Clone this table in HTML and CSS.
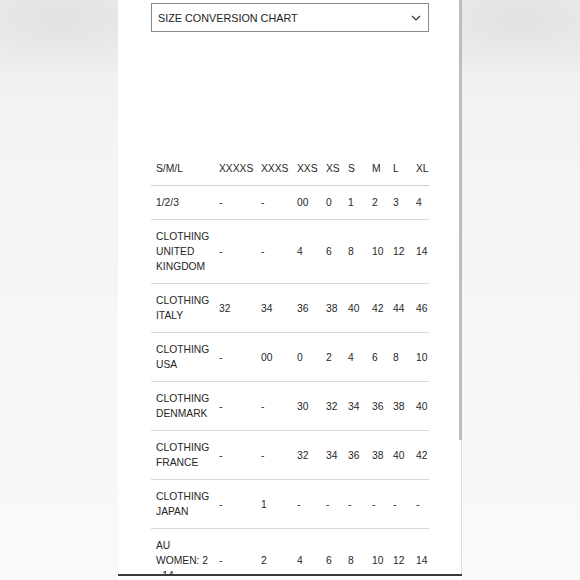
FILE: index.html
```html
<!DOCTYPE html>
<html lang="en">
<head>
<meta charset="utf-8">
<title>Size conversion chart</title>
<link rel="stylesheet" href="styles.css">
</head>
<body>
<div class="panel">
  <div class="content">
    <div class="select">
      <span class="select-label">SIZE CONVERSION CHART</span>
      <svg class="chev" width="10" height="6" viewBox="0 0 10 6"><polyline points="1,1 5,5 9,1" fill="none" stroke="#333" stroke-width="1.1"/></svg>
    </div>
    <table class="chart">
      <colgroup>
        <col class="c-name"><col class="c-4xs"><col class="c-3xs"><col class="c-2xs"><col class="c-xs"><col class="c-s"><col class="c-m"><col class="c-l"><col class="c-xl">
      </colgroup>
      <thead>
        <tr><th>S/M/L</th><th>XXXXS</th><th>XXXS</th><th>XXS</th><th>XS</th><th>S</th><th>M</th><th>L</th><th>XL</th></tr>
      </thead>
      <tbody>
        <tr><td>1/2/3</td><td>-</td><td>-</td><td>00</td><td>0</td><td>1</td><td>2</td><td>3</td><td>4</td></tr>
        <tr><td>CLOTHING<br>UNITED<br>KINGDOM</td><td>-</td><td>-</td><td>4</td><td>6</td><td>8</td><td>10</td><td>12</td><td>14</td></tr>
        <tr><td>CLOTHING<br>ITALY</td><td>32</td><td>34</td><td>36</td><td>38</td><td>40</td><td>42</td><td>44</td><td>46</td></tr>
        <tr><td>CLOTHING<br>USA</td><td>-</td><td>00</td><td>0</td><td>2</td><td>4</td><td>6</td><td>8</td><td>10</td></tr>
        <tr><td>CLOTHING<br>DENMARK</td><td>-</td><td>-</td><td>30</td><td>32</td><td>34</td><td>36</td><td>38</td><td>40</td></tr>
        <tr><td>CLOTHING<br>FRANCE</td><td>-</td><td>-</td><td>32</td><td>34</td><td>36</td><td>38</td><td>40</td><td>42</td></tr>
        <tr><td>CLOTHING<br>JAPAN</td><td>-</td><td>1</td><td>-</td><td>-</td><td>-</td><td>-</td><td>-</td><td>-</td></tr>
        <tr><td>AU<br>WOMEN: 2<br>- 14</td><td>-</td><td>2</td><td>4</td><td>6</td><td>8</td><td>10</td><td>12</td><td>14</td></tr>
      </tbody>
    </table>
  </div>
  <div class="scrollbar"><div class="thumb"></div></div>
  <div class="footer"></div>
</div>
</body>
</html>
```
FILE: styles.css
```css
html, body {
  margin: 0;
  padding: 0;
}
body {
  width: 580px;
  height: 580px;
  overflow: hidden;
  background:
    radial-gradient(ellipse 140px 60px at 60px 20px, #e2e2e2, rgba(226,226,226,0)),
    radial-gradient(ellipse 140px 60px at 520px 20px, #e2e2e2, rgba(226,226,226,0)),
    linear-gradient(#ececec 0px, #f3f3f3 120px, #f6f6f6 300px, #f9f9fa 580px);
  font-family: "Liberation Sans", Arial, sans-serif;
  color: #262626;
}
.panel {
  position: relative;
  width: 344px;
  height: 580px;
  margin-left: 118px;
  background: #fff;
  overflow: hidden;
}
.content {
  padding: 3px 33px 0 33px;
}
.select {
  display: flex;
  align-items: center;
  justify-content: space-between;
  height: 27px;
  border: 1px solid #8a8a8a;
  padding: 0 7px 0 6px;
}
.select-label {
  font-size: 10.8px;
  color: #222;
}
.chev {
  display: block;
  margin-top: 1px;
}
.chart {
  margin-top: 120px;
  width: 278px;
  border-collapse: collapse;
  table-layout: fixed;
  font-size: 10.3px;
  line-height: 15px;
}
.c-name { width: 63px; }
.c-4xs { width: 42px; }
.c-3xs { width: 36px; }
.c-2xs { width: 29px; }
.c-xs { width: 22px; }
.c-s { width: 24px; }
.c-m { width: 21px; }
.c-l { width: 23px; }
.c-xl { width: 18px; }
.chart th,
.chart td {
  padding: 9px 0 9px 5px;
  text-align: left;
  font-weight: normal;
  vertical-align: middle;
  white-space: nowrap;
  border-bottom: 1px solid #d9d9d9;
}
.chart th {
  border-bottom-color: #cfcfcf;
}
.scrollbar {
  position: absolute;
  top: 0;
  right: 0;
  width: 3px;
  height: 580px;
  border-right: 1px solid #dedede;
  box-sizing: border-box;
}
.thumb {
  width: 3px;
  height: 440px;
  background: #bdbdbd;
}
.footer {
  position: absolute;
  left: 0;
  right: 0;
  bottom: 0;
  height: 4px;
  background: #fff;
  border-top: 2px solid #3a3a3a;
}
```
